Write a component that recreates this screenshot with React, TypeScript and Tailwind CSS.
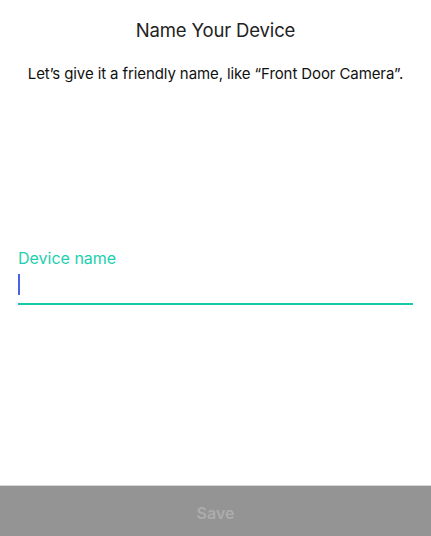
export default function App() {
  return (
    <div className="flex h-[536px] w-[431px] flex-col bg-white font-['Inter','Liberation_Sans',sans-serif]">
      <header className="pt-[18px] text-center">
        <h1 className="text-[18.5px] leading-[24px] tracking-[-0.15px] text-[#222]">Name Your Device</h1>
        <p className="mt-[22px] text-[15px] leading-[20px] tracking-[-0.1px] text-[#111]">
          Let’s give it a friendly name, like “Front Door Camera”.
        </p>
      </header>

      {/* device name field */}
      <div className="mt-[164px] px-[18px]">
        <label className="block text-[16px] leading-[20px] text-[#1ccfae]">Device name</label>
        <div className="mt-[6px] flex h-[31px] items-start border-b-2 border-[#14c9a8]">
          <span className="h-[21px] w-[2px] bg-[#4a62e8]" />
        </div>
      </div>

      <div className="flex-1" />

      <button
        disabled
        className="flex h-[51px] w-full items-center justify-center border-t border-[#d8d8d8] bg-[#949494] pt-[4px] text-[16px] font-semibold text-[#acacac]"
      >
        Save
      </button>
    </div>
  );
}
